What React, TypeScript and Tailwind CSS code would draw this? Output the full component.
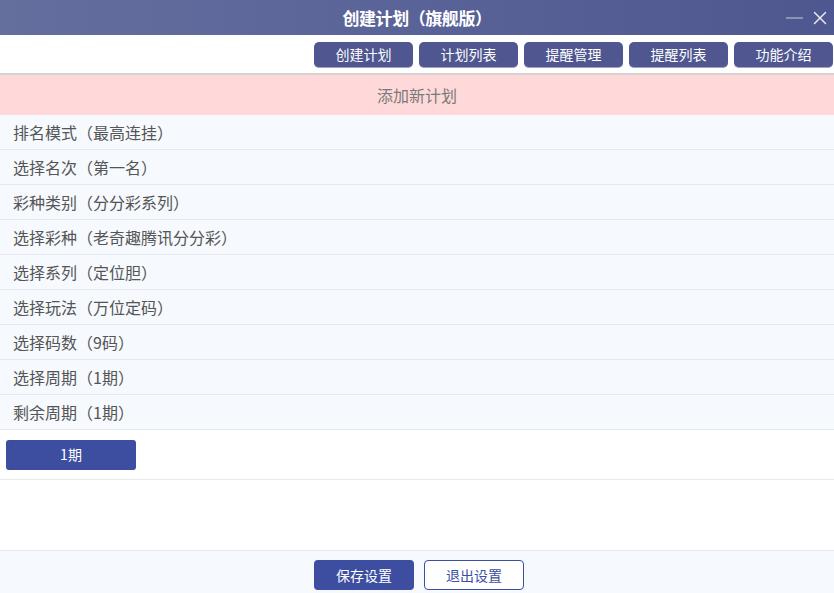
import { X } from 'lucide-react';

const tabs = ['创建计划', '计划列表', '提醒管理', '提醒列表', '功能介绍'];

const options = [
  '排名模式（最高连挂）',
  '选择名次（第一名）',
  '彩种类别（分分彩系列）',
  '选择彩种（老奇趣腾讯分分彩）',
  '选择系列（定位胆）',
  '选择玩法（万位定码）',
  '选择码数（9码）',
  '选择周期（1期）',
  '剩余周期（1期）',
];

export default function App() {
  return (
    <div className="w-[834px] h-[593px] bg-white flex flex-col overflow-hidden font-['Noto_Sans_CJK_SC','Noto_Sans',sans-serif]">
      <header className="h-[35px] shrink-0 bg-gradient-to-r from-[#656f9e] to-[#4f5790] relative flex items-center justify-center">
        <h1 className="text-white text-[17px] font-bold tracking-tight">创建计划（旗舰版）</h1>
        <div className="absolute right-[3px] top-0 h-full flex items-center gap-[6px]">
          <span className="w-[17px] h-[2px] bg-[#8d93b3]" />
          <X size={22} strokeWidth={1.6} className="text-[#e8eaf2]" />
        </div>
      </header>

      <nav className="h-[40px] shrink-0 flex items-center justify-end gap-[6px] pt-[1px] pr-[1px] border-b-2 border-[#d4d4d4]">
        {tabs.map(t => (
          <button key={t} className="w-[99px] h-[26px] rounded-[5px] bg-[#4f5690] text-white text-[14px] border-b border-[#9ea3c4] flex items-center justify-center">
            {t}
          </button>
        ))}
      </nav>

      <div className="h-[40px] shrink-0 bg-[#ffd9d9] flex items-center justify-center text-[16px] text-[#7a7a7a]">
        添加新计划
      </div>

      <ul className="shrink-0">
        {options.map(o => (
          <li key={o} className="h-[35px] bg-[#f6f9fd] border-b border-[#e6eaee] flex items-center px-[13px] text-[16px] text-[#555]">
            {o}
          </li>
        ))}
      </ul>

      <div className="h-[50px] shrink-0 border-b border-[#e6eaee] flex items-center px-[6px]">
        <button className="w-[130px] h-[30px] rounded-[3px] bg-[#3d4ea0] text-white text-[14px]">1期</button>
      </div>

      <div className="flex-1" />

      <footer className="h-[43px] shrink-0 bg-[#f6f9fd] border-t border-[#e4e9f0] flex items-start justify-center gap-[10px] pt-[9px] pl-[4px]">
        <button className="w-[100px] h-[30px] rounded-[4px] bg-[#3d4ea0] text-white text-[14px]">保存设置</button>
        <button className="w-[100px] h-[30px] rounded-[4px] bg-white border border-[#3d4ea0] text-[#3d4ea0] text-[14px]">退出设置</button>
      </footer>
    </div>
  );
}
